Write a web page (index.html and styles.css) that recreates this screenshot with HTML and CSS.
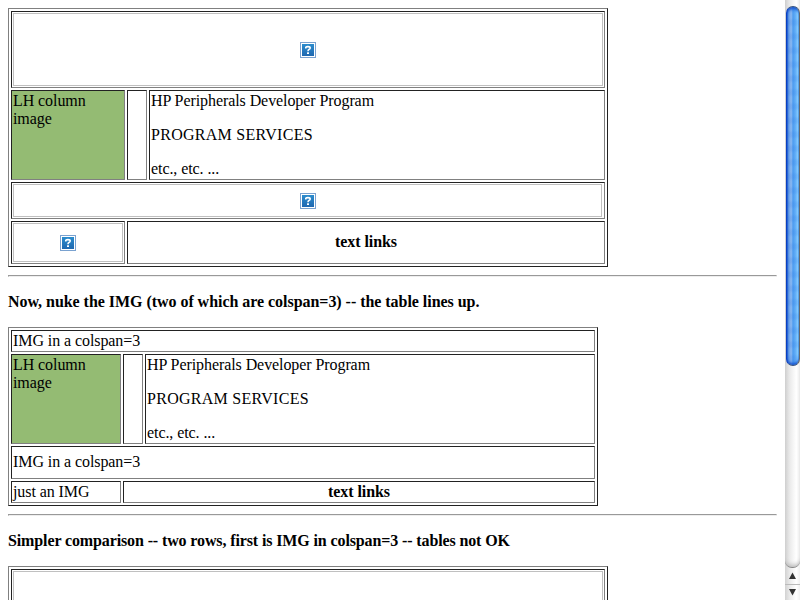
FILE: index.html
```html
<!DOCTYPE html>
<html lang="en">
<head>
<meta charset="utf-8">
<title>Table colspan test</title>
<link rel="stylesheet" href="styles.css">
</head>
<body>
<svg class="defs" aria-hidden="true">
  <defs>
    <linearGradient id="blue" x1="0" y1="0" x2="0" y2="1"><stop offset="0" stop-color="#2b8ccd"/><stop offset="1" stop-color="#1f68b0"/></linearGradient>
    <symbol id="missing" viewBox="0 0 16 16">
      <rect x=".5" y=".5" width="15" height="15" fill="#fff" stroke="#7aa2d0"/>
      <rect x="2" y="2" width="12" height="12" fill="url(#blue)"/>
      <path d="M5.8 6.4V5.3Q6.4 4.6 8 4.6Q10.2 4.6 10.2 6Q10.2 7 8.9 7.6Q8 8 8 9.2" fill="none" stroke="#fff" stroke-width="1.6"/>
      <rect x="7" y="10.3" width="2" height="1.7" fill="#fff"/>
    </symbol>
  </defs>
</svg>
<main class="page">
  <div class="table wide">
    <div class="cell span3"><div class="image"><svg class="icon"><use href="#missing"/></svg></div></div>
    <div class="cell green">LH column image</div>
    <div class="cell"></div>
    <div class="cell"><p>HP Peripherals Developer Program</p><p class="caps">PROGRAM SERVICES</p><p>etc., etc. ...</p></div>
    <div class="cell span3"><div class="image short"><svg class="icon"><use href="#missing"/></svg></div></div>
    <div class="cell"><div class="image"><svg class="icon"><use href="#missing"/></svg></div></div>
    <div class="cell span2 links raised">text links</div>
  </div>
  <hr>
  <h4>Now, nuke the IMG (two of which are colspan=3) -- the table lines up.</h4>
  <div class="table narrow">
    <div class="cell span3">IMG in a colspan=3</div>
    <div class="cell green">LH column image</div>
    <div class="cell"></div>
    <div class="cell"><p>HP Peripherals Developer Program</p><p class="caps">PROGRAM SERVICES</p><p>etc., etc. ...</p></div>
    <div class="cell span3 middle raised">IMG in a colspan=3</div>
    <div class="cell">just an IMG</div>
    <div class="cell span2 links">text links</div>
  </div>
  <hr>
  <h4 class="tight">Simpler comparison -- two rows, first is IMG in colspan=3 -- tables not OK</h4>
  <div class="table wide">
    <div class="cell span3"><div class="image"></div></div>
  </div>
</main>
<aside class="scrollbar">
  <div class="track"><div class="thumb"></div></div>
  <div class="arrow"><svg viewBox="0 0 15 15"><path d="M4 10L7.5 3.5L11 10z"/></svg></div>
  <div class="arrow"><svg viewBox="0 0 15 15"><path d="M4 4L7.5 10.5L11 4z"/></svg></div>
</aside>
</body>
</html>
```
FILE: styles.css
```css
* { box-sizing: border-box; }
body {
  margin: 0;
  width: 800px;
  height: 600px;
  display: flex;
  overflow: hidden;
  background: #fff;
  color: #000;
  font: 16px/18px "Liberation Serif", serif;
  letter-spacing: -0.08px;
}
.defs { position: absolute; width: 0; height: 0; }
.page { width: 785px; height: 600px; padding: 8px 8px 0; overflow: hidden; }
.table {
  display: grid;
  gap: 2px;
  padding: 2px;
  border: 1px solid;
  border-color: #808080 #222 #222 #808080;
}
.wide { width: 600px; grid-template: 77px 90px 37px 43px / 114px 20px 456px; }
.narrow { width: 590px; grid-template: 22px 90px 33px 22px / 110px 20px 450px; }
.cell {
  padding: 1px;
  border: 1px solid;
  border-color: #222 #808080 #808080 #222;
}
.span2 { grid-column: span 2; }
.span3 { grid-column: span 3; }
.green { background: #94bb73; }
.links { display: flex; align-items: center; justify-content: center; font-weight: bold; }
.middle { display: flex; align-items: center; }
.raised { padding-bottom: 3px; }
.image {
  height: 100%;
  display: flex;
  align-items: center;
  justify-content: center;
  border: 1px solid #c0c0c0;
}
.short { width: 589px; }
.icon { width: 16px; height: 16px; }
p { margin: 0 0 16px; }
p:last-child { margin-bottom: 0; }
.caps { letter-spacing: 0.28px; }
hr { width: 769px; height: 2px; margin: 8px 0 16px; border: 1px solid; border-color: #999 #eee #eee #999; }
h4 { margin: 0 0 16px; font-size: 16px; letter-spacing: -0.04px; }
.tight { letter-spacing: -0.12px; }
.scrollbar {
  width: 15px;
  height: 600px;
  display: flex;
  flex-direction: column;
  background: linear-gradient(90deg, #d2d2d2, #ececec 35%, #fff 75%, #f0f0f0);
}
.track { height: 568px; padding-top: 6px; border-bottom: 1px solid #888; border-radius: 0 0 7px 7px; box-shadow: inset 0 -4px 4px -2px #bbb; }
.thumb {
  width: 14px;
  height: 360px;
  margin-left: 1px;
  border: 1px solid;
  border-color: #35507f #62666c #35507f #0a3fc0;
  border-radius: 7px;
  background:
    repeating-linear-gradient(180deg, rgba(30, 100, 220, .12) 0 3px, transparent 6px 11px, rgba(30, 100, 220, .12) 14px),
    linear-gradient(90deg, #1552cf, #669fe8 15%, #8db9f0 35%, #4d9cf0 50%, #62aef7 70%, #80c8ff 88%, #5298dc);
  box-shadow: inset 0 4px 3px -2px #1552cf, inset 0 -4px 3px -2px #1552cf;
}
.arrow { height: 16px; border-top: 1px solid #bbb; }
.arrow:nth-child(2) { border-top-color: transparent; }
.arrow svg { display: block; width: 15px; height: 15px; fill: #333; }
```
